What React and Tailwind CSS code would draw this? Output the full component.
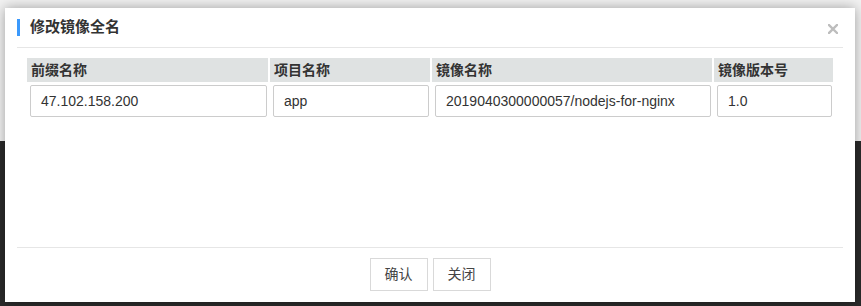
import React from "react";

const font = { fontFamily: '"Liberation Sans", "Noto Sans CJK SC", sans-serif' };

const cols = [
  { label: "前缀名称", value: "47.102.158.200" },
  { label: "项目名称", value: "app" },
  { label: "镜像名称", value: "2019040300000057/nodejs-for-nginx" },
  { label: "镜像版本号", value: "1.0" },
];

export default function App() {
  return (
    <div className="relative w-[861px] h-[306px] overflow-hidden flex flex-col" style={font}>
      <div className="h-[141px] bg-[#f2f2f2]" />
      <div className="flex-1 bg-[#2b2b2b]" />

      <div className="absolute left-[5px] top-[8px] w-[850px] h-[294px] bg-white shadow-[0_0_12px_rgba(0,0,0,0.35)] flex flex-col px-[12px]">
        <div className="h-[40px] flex items-center border-b border-[#e6e6e6]">
          <div className="w-[3px] h-[17px] bg-[#3b99fc]" />
          <div className="ml-[10px] text-[15px] font-bold text-[#333]">修改镜像全名</div>
          <svg className="ml-auto mr-[5px] mt-[2px]" width="10" height="10" viewBox="0 0 10 10">
            <path d="M1 1L9 9M9 1L1 9" stroke="#bdbdbd" strokeWidth="2.4" strokeLinecap="square" />
          </svg>
        </div>

        <div className="flex-1 px-[10px] pt-[10px]">
          <div className="grid grid-cols-[241px_160px_280px_119px] gap-x-[2px]">
            {cols.map((c) => (
              <div key={c.label} className="h-[24px] bg-[#dfe2e2] pl-[4px] flex items-center text-[14px] font-bold text-[#333]">
                {c.label}
              </div>
            ))}
            {cols.map((c) => (
              <div key={c.label + "v"} className="pt-[3px] pl-[3px] pr-[1px]">
                <div className="h-[32px] border border-[#cccccc] rounded-[2px] pl-[10px] flex items-center text-[14px] text-[#333]">
                  {c.value}
                </div>
              </div>
            ))}
          </div>
        </div>

        <div className="h-[55px] border-t border-[#e6e6e6] flex justify-center gap-[5px] pt-[10px]">
          <button className="h-[33px] w-[58px] border border-[#d9d9d9] bg-white text-[14px] text-[#444]" style={font}>确认</button>
          <button className="h-[33px] w-[58px] border border-[#d9d9d9] bg-white text-[14px] text-[#444]" style={font}>关闭</button>
        </div>
      </div>
    </div>
  );
}
